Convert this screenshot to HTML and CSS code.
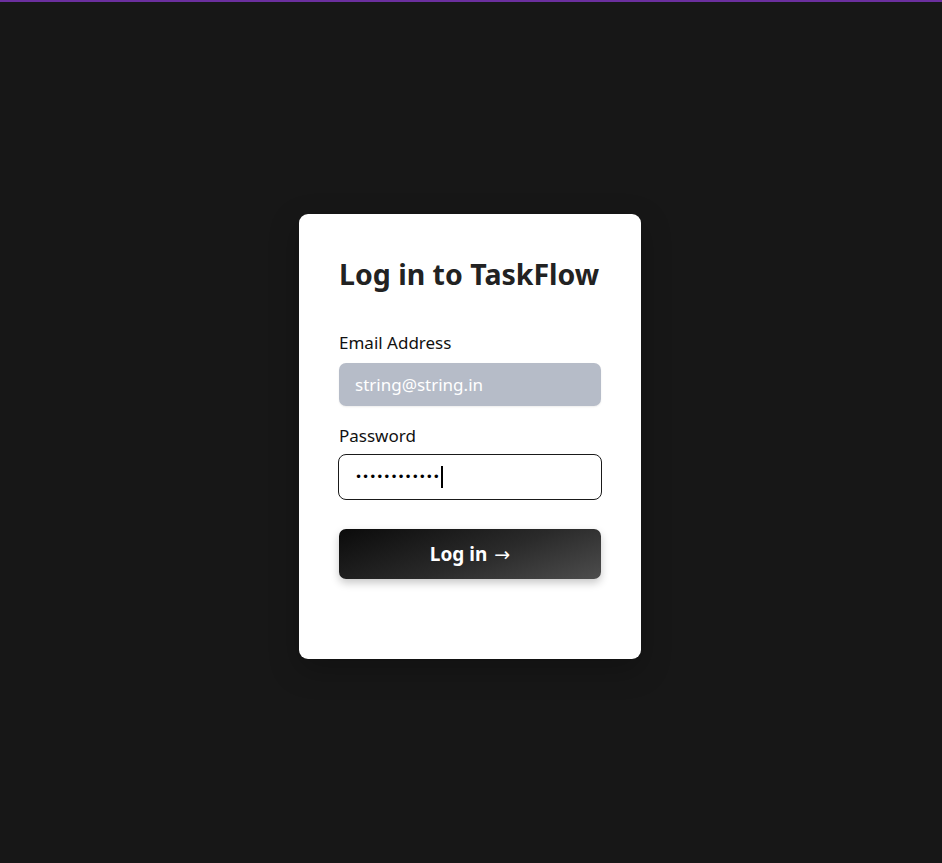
FILE: index.html
```html
<!DOCTYPE html>
<html lang="en">
<head>
<meta charset="utf-8">
<title>Log in to TaskFlow</title>
<link rel="stylesheet" href="styles.css">
</head>
<body>
<div class="topbar"></div>
<main class="page">
  <form class="card">
    <h1 class="title">Log in to TaskFlow</h1>
    <label class="label" for="email">Email Address</label>
    <div class="input input-filled" id="email">string@string.in</div>
    <label class="label label-pw" for="pw">Password</label>
    <div class="input input-focus" id="pw"><span class="dots">••••••••••••</span><span class="caret"></span></div>
    <button class="btn" type="button">Log in <span class="arrow">→</span></button>
  </form>
</main>
</body>
</html>
```
FILE: styles.css
```css
* { box-sizing: border-box; }
html, body { margin: 0; padding: 0; }
body {
  background: #171717;
  font-family: "Noto Sans", "Open Sans", sans-serif;
  height: 863px;
  overflow: hidden;
}
.topbar { height: 2px; background: #6b2f9e; }
.page {
  display: flex;
  justify-content: center;
  padding-top: 212px;
  padding-right: 2px;
}
.card {
  width: 342px;
  background: #ffffff;
  border-radius: 9px;
  padding: 40px 40px 80px;
  display: flex;
  flex-direction: column;
  box-shadow: 0 10px 30px rgba(0,0,0,0.25);
}
.title {
  margin: 0;
  font-size: 28.5px;
  line-height: 40px;
  font-weight: 700;
  color: #222222;
}
.label {
  margin-top: 38px;
  font-size: 17px;
  line-height: 22px;
  color: #111111;
}
.label-pw { margin-top: 19px; }
.input {
  margin-top: 9px;
  height: 43px;
  border-radius: 7px;
  font-size: 17px;
  display: flex;
  align-items: center;
  padding-left: 16px;
}
.input-filled {
  background: #b6bcc8;
  color: #ffffff;
  box-shadow: 0 1px 2px rgba(0,0,0,0.08);
}
.input-focus {
  height: 46px;
  margin-top: 7px;
  margin-left: -1px;
  margin-right: -1px;
  border: 1.5px solid #1a1a1a;
  border-radius: 8px;
  color: #000;
}
.dots { font-family: "DejaVu Sans", sans-serif; font-size: 12px; letter-spacing: 0; }
.caret { width: 2px; height: 22px; background: #000; margin-left: 1px; }
.btn {
  margin-top: 29px;
  height: 50px;
  border: none;
  border-radius: 7px;
  background: linear-gradient(160deg, #0b0b0b 0%, #2a2a2a 55%, #4d4d4d 100%);
  color: #ffffff;
  font-family: inherit;
  font-size: 19px;
  font-weight: 700;
  box-shadow: 0 4px 8px rgba(0,0,0,0.22);
}
.arrow { font-family: "DejaVu Sans", sans-serif; font-weight: 400; font-size: 19px; margin-left: 2px; }
```
